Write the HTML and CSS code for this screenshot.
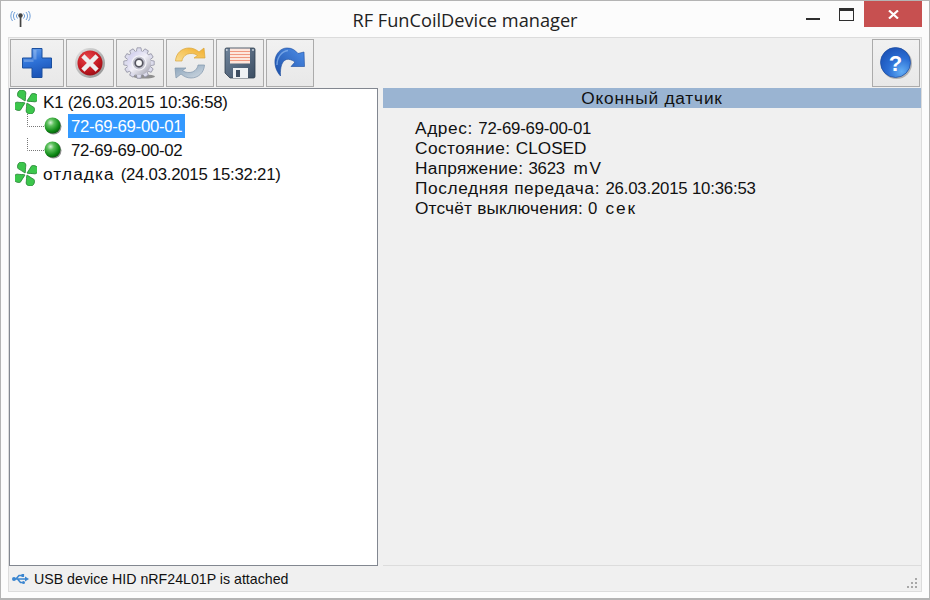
FILE: index.html
```html
<!DOCTYPE html>
<html lang="ru">
<head>
<meta charset="utf-8">
<title>RF FunCoilDevice manager</title>
<link rel="stylesheet" href="styles.css">
</head>
<body>
<svg class="defs" width="0" height="0" aria-hidden="true">
  <defs>
    <linearGradient id="gBlue" x1="0" y1="0" x2="0.3" y2="1"><stop offset="0" stop-color="#6ea6ee"/><stop offset=".5" stop-color="#2f73d8"/><stop offset="1" stop-color="#1c55b8"/></linearGradient>
    <radialGradient id="gRed" cx=".4" cy=".3" r=".8"><stop offset="0" stop-color="#e8464a"/><stop offset=".6" stop-color="#c41a22"/><stop offset="1" stop-color="#8e0c14"/></radialGradient>
    <linearGradient id="gRing" x1="0" y1="0" x2="1" y2="1"><stop offset="0" stop-color="#e6e6e6"/><stop offset="1" stop-color="#8d8d8d"/></linearGradient>
    <linearGradient id="gGear" x1="0" y1="0" x2="1" y2="1"><stop offset="0" stop-color="#c9c6ec"/><stop offset=".5" stop-color="#f0eff7"/><stop offset="1" stop-color="#9a9aa8"/></linearGradient>
    <linearGradient id="gYel" x1="0" y1="1" x2="1" y2="0"><stop offset="0" stop-color="#f9dd90"/><stop offset="1" stop-color="#f2ae2c"/></linearGradient>
    <linearGradient id="gGrey" x1="0" y1="0" x2="1" y2="1"><stop offset="0" stop-color="#d2dbe3"/><stop offset="1" stop-color="#86a0b8"/></linearGradient>
    <linearGradient id="gDisk" x1="0" y1="0" x2="1" y2="1"><stop offset="0" stop-color="#71859c"/><stop offset="1" stop-color="#3c4e63"/></linearGradient>
    <linearGradient id="gRedo" x1="0" y1="1" x2="1" y2="0"><stop offset="0" stop-color="#1c4fa8"/><stop offset="1" stop-color="#4f8fe8"/></linearGradient>
    <radialGradient id="gHelp" cx=".7" cy=".8" r=".9"><stop offset="0" stop-color="#63aef5"/><stop offset=".5" stop-color="#2b6ed4"/><stop offset="1" stop-color="#1a50b4"/></radialGradient>
    <radialGradient id="gBall" cx=".38" cy=".32" r=".72"><stop offset="0" stop-color="#d8f0d8"/><stop offset=".3" stop-color="#5cc05c"/><stop offset=".75" stop-color="#0f8a16"/><stop offset="1" stop-color="#075a0c"/></radialGradient>
    <symbol id="fan" viewBox="0 0 22 24">
      <g fill="#3cc64c" stroke="#1c7a2a" stroke-width=".7" stroke-linejoin="round" transform="rotate(12 11 12)">
        <path id="blade" d="M10.500 11.500C8 10.500 5 9.300 1.800 8.200 .3 5.500 1 2 4 1 6.800 .7 8.500 1.500 9 3.300 9.300 6 9.500 9 10.500 11.500Z"/>
        <use href="#blade" transform="rotate(90 11 12)"/>
        <use href="#blade" transform="rotate(180 11 12)"/>
        <use href="#blade" transform="rotate(270 11 12)"/>
      </g>
      <circle cx="11" cy="12" r="1.500" fill="#fff"/>
    </symbol>
    <symbol id="ball" viewBox="0 0 18 18">
      <circle cx="9.500" cy="9.500" r="8" fill="#333" opacity=".55"/>
      <circle cx="8.500" cy="8.500" r="8" fill="url(#gBall)"/>
    </symbol>
    <path id="tooth" d="M13.300 5L14 .8H18L18.700 5Z" fill="#dcdcec" stroke="#8a8a9c" stroke-width=".7"/>
  </defs>
</svg>
<div class="window">
  <header class="titlebar">
    <svg class="app-icon" width="21" height="18" viewBox="0 0 21 18">
      <g fill="none" stroke="#6f9fd8" stroke-width="1">
        <path d="M7.500 3.500a3.500 3.500 0 0 0 0 5M13.500 3.500a3.500 3.500 0 0 1 0 5"/>
        <path d="M5 2a6 6 0 0 0 0 8M16 2a6 6 0 0 1 0 8"/>
        <path d="M2.500 1a9 9 0 0 0 0 10M18.500 1a9 9 0 0 1 0 10"/>
      </g>
      <circle cx="10.500" cy="5.500" r="2.200" fill="#444"/>
      <rect x="9.700" y="6" width="1.700" height="11" fill="#444"/>
    </svg>
    <h1 class="title">RF FunCoilDevice manager</h1>
    <div class="win-controls">
      <span class="win-btn"><span class="min-glyph"></span></span>
      <span class="win-btn"><span class="max-glyph"></span></span>
      <span class="win-close">
        <svg width="11" height="9" viewBox="0 0 11 9"><path d="M1 .5L10 8.500M10 .5L1 8.500" stroke="#fff" stroke-width="2.200" fill="none"/></svg>
      </span>
    </div>
  </header>

  <div class="client">
    <div class="toolbar">
      <button class="tool tool-wide">
        <svg width="32" height="32" viewBox="0 0 32 32"><path d="M11 1.500h10v9.500h9.500v10H21v9.500H11V21H1.500V11H11z" fill="url(#gBlue)" stroke="#1b4f9e" stroke-linejoin="round"/><path d="M12.500 3h3v9.500H3v2.500h9.500z" fill="#fff" opacity=".22"/></svg>
      </button>
      <button class="tool">
        <svg width="32" height="32" viewBox="0 0 32 32"><circle cx="16" cy="16" r="15" fill="url(#gRing)"/><circle cx="16" cy="16" r="12.500" fill="url(#gRed)"/><path d="M10.500 10.500L21.500 21.500M21.500 10.500L10.500 21.500" stroke="#eee" stroke-width="4.500" stroke-linecap="square"/></svg>
      </button>
      <button class="tool">
        <svg width="34" height="32" viewBox="0 0 34 32">
          <ellipse cx="21" cy="29.500" rx="11" ry="2" fill="#444" opacity=".55"/>
          <use href="#tooth"/>
          <use href="#tooth" transform="rotate(30 16 16)"/>
          <use href="#tooth" transform="rotate(60 16 16)"/>
          <use href="#tooth" transform="rotate(90 16 16)"/>
          <use href="#tooth" transform="rotate(120 16 16)"/>
          <use href="#tooth" transform="rotate(150 16 16)"/>
          <use href="#tooth" transform="rotate(180 16 16)"/>
          <use href="#tooth" transform="rotate(210 16 16)"/>
          <use href="#tooth" transform="rotate(240 16 16)"/>
          <use href="#tooth" transform="rotate(270 16 16)"/>
          <use href="#tooth" transform="rotate(300 16 16)"/>
          <use href="#tooth" transform="rotate(330 16 16)"/>
          <circle cx="16" cy="16" r="12" fill="url(#gGear)"/>
          <circle cx="16" cy="16" r="7" fill="#c4c4cf" stroke="#f6f6fa" stroke-width="1.200"/>
          <circle cx="16" cy="16" r="3.800" fill="#fafafa" stroke="#55555f" stroke-width="1.700"/>
        </svg>
      </button>
      <button class="tool">
        <svg width="32" height="32" viewBox="0 0 32 32">
          <path d="M1.500 14C2 6 8 1 15 1c4 0 7 1.500 10 4l5-4 1 10H20l3.500-2.500C21.500 7 19.500 6.500 17 6.500 12 6.500 8.500 10 8 14z" fill="url(#gYel)" stroke="#d9a53a" stroke-width=".7" stroke-linejoin="round"/>
          <path d="M1.500 14C2 6 8 1 15 1c4 0 7 1.500 10 4l5-4 1 10H20l3.500-2.500C21.500 7 19.500 6.500 17 6.500 12 6.500 8.500 10 8 14z" transform="rotate(180 16 16)" fill="url(#gGrey)" stroke="#7f95aa" stroke-width=".7" stroke-linejoin="round"/>
        </svg>
      </button>
      <button class="tool">
        <svg width="32" height="32" viewBox="0 0 32 32">
          <path d="M2.500 1h27a1.500 1.500 0 0 1 1.500 1.500v27a1.500 1.500 0 0 1-1.500 1.500H6L1 26V2.500A1.500 1.500 0 0 1 2.500 1z" fill="url(#gDisk)" stroke="#2e3c4d" stroke-width=".8"/>
          <rect x="6" y="1.500" width="20" height="15" fill="#fde6dc"/>
          <path d="M6 4.500h20M6 7.500h20M6 10.500h20M6 13.500h20" stroke="#f0977f"/>
          <rect x="9" y="21" width="15" height="10" fill="#eef1f4"/>
          <rect x="12" y="23" width="4" height="7" fill="#3c4c60"/>
          <circle cx="2.800" cy="3" r=".9" fill="#cfd8e0"/>
          <circle cx="29" cy="3" r=".9" fill="#cfd8e0"/>
        </svg>
      </button>
      <button class="tool">
        <svg width="32" height="32" viewBox="0 0 32 32">
          <path d="M6.500 29C2 24 .5 18 1 13 2 6 7 1 13 1c5 0 8 2 11 5.500L30 5l.5 14.500H17l4-4.500c-3-2-6-3.200-8.500-2.500C8 13.800 6 20 6.500 29z" fill="url(#gRedo)" stroke="#1a4a9c" stroke-width=".6" stroke-linejoin="round"/>
          <path d="M3 18C3 10 8 4 14 3.500" fill="none" stroke="#8db8f0" stroke-width="1.400" opacity=".7"/>
        </svg>
      </button>
      <span class="toolbar-gap"></span>
      <button class="tool">
        <svg width="34" height="34" viewBox="0 0 34 34">
          <circle cx="17.500" cy="17.500" r="15.500" fill="#444" opacity=".35"/>
          <circle cx="16.500" cy="16.500" r="15" fill="url(#gHelp)" stroke="#1b4a9e" stroke-width=".7"/>
          <text class="help-mark" x="16.500" y="24.500" text-anchor="middle">?</text>
        </svg>
      </button>
    </div>

    <div class="panes">
      <div class="tree">
        <div class="row">
          <svg class="fan" width="22" height="24"><use href="#fan"/></svg>
          <span class="label"><span class="cy-k">K</span>1 (26.03.2015 10:36:58)</span>
        </div>
        <div class="row">
          <svg class="branch" width="18" height="24" viewBox="0 0 18 24"><path d="M.5 0V12.500H18" fill="none" stroke="#777" stroke-dasharray="1 1"/></svg>
          <svg class="ball" width="18" height="18"><use href="#ball"/></svg>
          <span class="label selected">72-69-69-00-01</span>
        </div>
        <div class="row">
          <svg class="branch" width="18" height="24" viewBox="0 0 18 24"><path d="M.5 0V12.500H18" fill="none" stroke="#777" stroke-dasharray="1 1"/></svg>
          <svg class="ball" width="18" height="18"><use href="#ball"/></svg>
          <span class="label child">72-69-69-00-02</span>
        </div>
        <div class="row">
          <svg class="fan" width="22" height="24"><use href="#fan"/></svg>
          <span class="label"><span class="cy cy-word">отладка </span>(24.03.2015 15:32:21)</span>
        </div>
      </div>
      <div class="details">
        <div class="details-head"><span class="cy cy-wide">Оконный датчик</span></div>
        <div class="details-body">
          <div class="line"><span class="cy">Адрес: </span>72-69-69-00-01</div>
          <div class="line"><span class="cy cy-mid">Состояние: </span><span class="cy-lat">CLOSED</span></div>
          <div class="line"><span class="cy cy-even">Напряжение: </span>3623 <span class="cy-lat unit">mV</span></div>
          <div class="line"><span class="cy">Последняя передача: </span>26.03.2015 10:36:53</div>
          <div class="line"><span class="cy cy-tight">Отсчёт выключения: </span>0 <span class="cy unit">сек</span></div>
        </div>
      </div>
    </div>

    <footer class="statusbar">
      <svg class="usb" width="17" height="10" viewBox="0 0 17 10">
        <path d="M1 5H14M4 5L7 1.500H10M5.500 5L8.500 8.500H10.500" fill="none" stroke="#3b86d0" stroke-width="1.600"/>
        <circle cx="2" cy="5" r="2" fill="#3b86d0"/>
        <path d="M13 2.500l4 2.500-4 2.500z" fill="#3b86d0"/>
        <rect x="9.500" y="0" width="2.600" height="3" fill="#3b86d0"/>
        <circle cx="11.500" cy="8.500" r="1.500" fill="#3b86d0"/>
      </svg>
      <span class="status-text">USB device HID nRF24L01P is attached</span>
      <svg class="grip" width="11" height="11" viewBox="0 0 11 11">
        <g fill="#a8a8a8">
          <rect x="8" y="0" width="2" height="2"/>
          <rect x="4" y="4" width="2" height="2"/><rect x="8" y="4" width="2" height="2"/>
          <rect x="0" y="8" width="2" height="2"/><rect x="4" y="8" width="2" height="2"/><rect x="8" y="8" width="2" height="2"/>
        </g>
      </svg>
    </footer>
  </div>
</div>
</body>
</html>
```
FILE: styles.css
```css
* { box-sizing: border-box; }
html, body { margin: 0; height: 100%; }
body { width: 930px; height: 600px; overflow: hidden; background: #fcfcfc; }
.defs { display: block; height: 0; }
.window {
  width: 930px; height: 600px;
  display: flex; flex-direction: column;
  background: #fcfcfc;
  border: 1px solid #b4b4b4;
  border-width: 1px 1px 2px 1px;
  padding: 0 7px 6px 7px;
  font-family: "Liberation Sans", Arial, sans-serif;
  color: #111;
}
.titlebar { height: 36px; flex: none; display: grid; grid-template-columns: 1fr auto 1fr; align-items: start; }
.app-icon { margin: 9px 0 0 2px; }
.title {
  margin: 7px 0 0; text-align: center;
  font: 400 18.200px/24px "Open Sans", sans-serif; color: #222;
}
.win-controls { display: flex; align-items: flex-start; justify-content: flex-end; margin-right: -7px; }
.win-btn { width: 29px; height: 26px; display: flex; justify-content: center; }
.min-glyph { width: 14px; height: 2px; background: #2e2e2e; margin-top: 17px; margin-left: 1px; }
.max-glyph { width: 15px; height: 13px; border: 1px solid #2e2e2e; border-top-width: 3px; margin-top: 7px; margin-left: 10px; }
.win-close { width: 58px; height: 26px; margin-left: 8px; margin-right: 7px; background: #c75050; display: flex; align-items: center; justify-content: center; }
.client {
  flex: 1; min-height: 0;
  display: flex; flex-direction: column;
  background: #f0f0f0;
  border: 1px solid #dcdcdc;
}
.toolbar { height: 50px; flex: none; display: flex; gap: 2px; padding: 1px 1px 0 1px; }
.tool {
  width: 48px; height: 48px; padding: 0; flex: none;
  display: flex; align-items: center; justify-content: center;
  background: linear-gradient(#f1f1f1, #e8e8e8);
  border: 1px solid #ababab;
  cursor: default;
}
.tool-wide { width: 54px; }
.toolbar-gap { flex: 1; }
.help-mark { font: 700 22px "Liberation Sans", sans-serif; fill: #fff; }
.panes { flex: 1; min-height: 0; display: flex; gap: 5px; }
.tree {
  width: 369px; background: #fff;
  border: 1px solid #828790;
  padding-top: 1px;
  font-size: 16.800px;
  letter-spacing: -.25px;
}
.row { height: 24px; display: flex; align-items: center; }
.fan { margin-left: 5px; margin-right: 6px; flex: none; }
.branch { margin-left: 17px; margin-right: -1px; flex: none; }
.ball { flex: none; }
.label { line-height: 24px; white-space: nowrap; }
.selected, .child { height: 24px; line-height: 26px; padding: 0 3px; margin-left: 6px; letter-spacing: -.32px; }
.selected { background: #3399ff; color: #fff; }
.cy { font-size: 17.300px; letter-spacing: .6px; }
.cy-k { font-size: 17.300px; }
.cy-word { letter-spacing: 1.100px; }
.cy-wide { letter-spacing: .8px; }
.cy-mid { letter-spacing: .45px; }
.cy-even { letter-spacing: .3px; }
.cy-tight { letter-spacing: .17px; }
.cy-lat { font-size: 17.200px; letter-spacing: 0; }
.unit { margin-left: 4px; letter-spacing: 1.800px; }
.details { flex: 1; display: flex; flex-direction: column; border-bottom: 1px solid #dcdcdc; }
.details-head { height: 20px; background: #9ab4d2; text-align: center; font-size: 16px; line-height: 20px; }
.details-body { padding: 10px 0 0 32px; font-size: 16.800px; line-height: 20px; letter-spacing: -.2px; }
.line { height: 20px; }
.statusbar { height: 25px; flex: none; display: flex; align-items: center; font-size: 14.200px; padding: 0 3px; }
.usb { margin-right: 5px; flex: none; }
.status-text { flex: 1; }
.grip { align-self: flex-end; margin-bottom: 2px; }
```
